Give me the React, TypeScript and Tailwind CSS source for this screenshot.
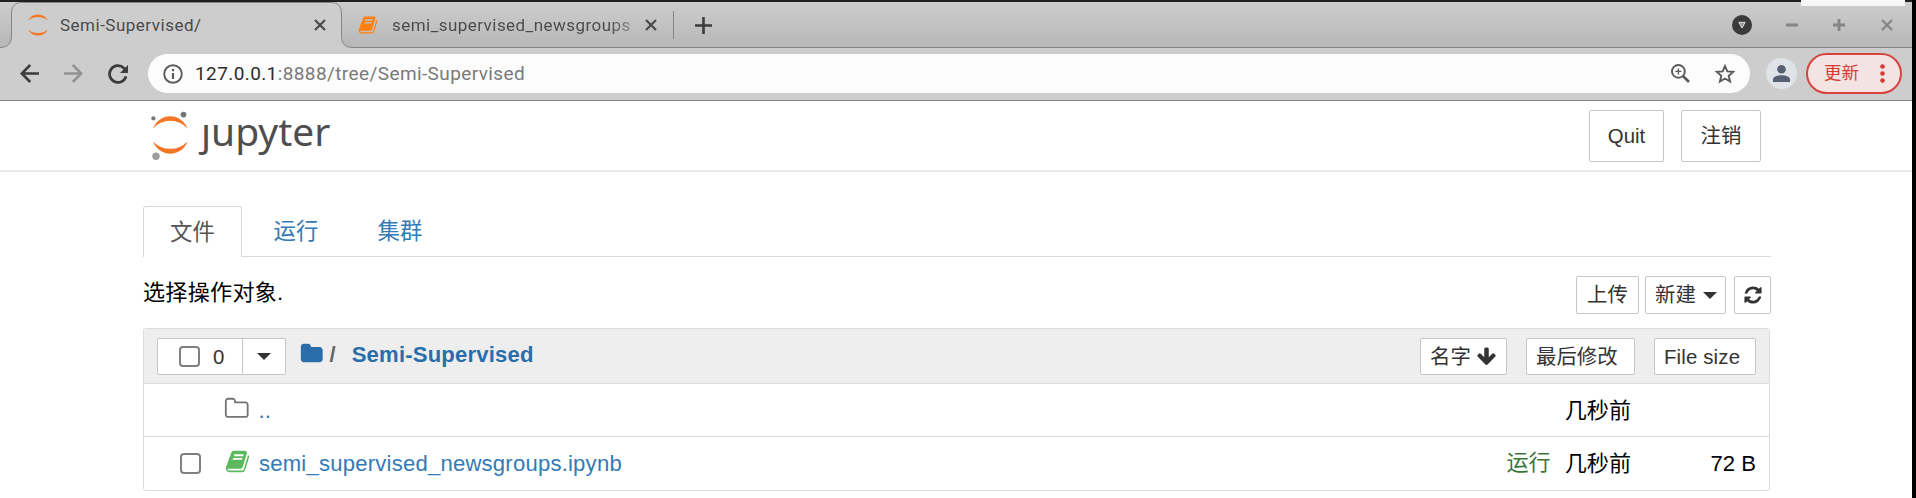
import type { ReactNode } from "react";

const BOOK =
  "M1703 478q40 57 18 129l-275 906q-19 64-76.5 107.5t-122.5 43.5h-923q-77 0-148.5-53.5t-99.5-131.5q-24-67-2-127 0-4 3-27t4-37q1-8-3-21.5t-3-19.5q2-11 8-21t16.5-23.5 16.5-23.5q23-38 45-91.5t30-91.5q3-10 .5-30t-.5-28q3-11 17-28t17-23q21-36 42-92t25-90q1-9-2.5-32t.5-28q4-13 22-30.5t22-22.5q19-26 42.5-84.5t27.5-96.5q1-8-3-25.5t-2-26.5q2-8 9-18t18-23 17-21q8-12 16.5-30.5t15-35 16-36 19.5-32 26.5-23.5 36-11.5 47.5 5.5l-1 3q38-9 51-9h761q74 0 114 56t18 130l-274 906q-36 119-71.5 153.5t-128.5 34.5h-869q-27 0-38 15-11 16-1 43 24 70 144 70h923q29 0 56-15.5t35-41.5l300-987q7-22 5-57 38 15 59 43zm-1064 2q-4 13 2 22.5t20 9.5h608q13 0 25.5-9.5t16.5-22.5l21-64q4-13-2-22.5t-20-9.5h-608q-13 0-25.5 9.5t-16.5 22.5zm-83 256q-4 13 2 22.5t20 9.5h608q13 0 25.5-9.5t16.5-22.5l21-64q4-13-2-22.5t-20-9.5h-608q-13 0-25.5 9.5t-16.5 22.5z";
const FOLDER =
  "M1728 608v704q0 92-66 158t-158 66h-1216q-92 0-158-66t-66-158v-960q0-92 66-158t158-66h320q92 0 158 66t66 158v32h672q92 0 158 66t66 158z";
const FOLDER_OPEN =
  "M1600 1312v-704q0-40-28-68t-68-28h-704q-40 0-68-28t-28-68v-64q0-40-28-68t-68-28h-320q-40 0-68 28t-28 68v960q0 40 28 68t68 28h1216q40 0 68-28t28-68zm128-704v704q0 92-66 158t-158 66h-1216q-92 0-158-66t-66-158v-960q0-92 66-158t158-66h320q92 0 158 66t66 158v32h672q92 0 158 66t66 158z";
const REFRESH =
  "M1639 1056q0 5-1 7-64 268-268 434.5t-478 166.5q-146 0-282.5-55t-243.5-157l-129 129q-19 19-45 19t-45-19-19-45v-448q0-26 19-45t45-19h448q26 0 45 19t19 45-19 45l-137 137q71 66 161 102t187 36q134 0 250-65t186-179q11-17 53-117 8-23 30-23h192q13 0 22.5 9.5t9.5 22.5zm25-800v448q0 26-19 45t-45 19h-448q-26 0-45-19t-19-45 19-45l138-138q-148-137-349-137-134 0-250 65t-186 179q-11 17-53 117-8 23-30 23h-199q-13 0-22.5-9.5t-9.5-22.5v-7q65-268 270-434.5t480-166.5q146 0 284 55.5t245 156.5l130-129q19-19 45-19t45 19 19 45z";
const ARROW_DOWN =
  "M1675 832q0 53-37 90l-651 652q-39 37-91 37-53 0-90-37l-651-652q-38-36-38-90 0-53 38-91l74-75q39-37 91-37 53 0 90 37l294 294v-704q0-52 38-90t90-38h128q52 0 90 38t38 90v704l294-294q37-37 90-37 52 0 91 37l75 75q37 39 37 91z";

function Glyph({ d, className }: { d: string; className: string }) {
  return (
    <svg viewBox="0 0 1792 1792" fill="currentColor" className={`shrink-0 ${className}`}>
      <path d={d} />
    </svg>
  );
}

function Cross({ className }: { className: string }) {
  return (
    <svg viewBox="0 0 12 12" className={`size-3 shrink-0 ${className}`} stroke="currentColor" strokeWidth="2.2">
      <path d="M1 1L11 11M11 1L1 11" />
    </svg>
  );
}

function Button({ className, children }: { className: string; children: ReactNode }) {
  return (
    <button
      className={`flex shrink-0 items-center whitespace-nowrap rounded-[2px] border border-[#c6c6c6] bg-white text-[20.4px] leading-none text-[#333] ${className}`}
    >
      {children}
    </button>
  );
}

function Checkbox() {
  return <span className="size-[21px] shrink-0 rounded-[4px] border-2 border-[#808080] bg-white" />;
}

function Caret() {
  return (
    <svg viewBox="0 0 14 7" className="h-[7px] w-[14px] shrink-0" fill="#333">
      <path d="M0 0H14L7 7Z" />
    </svg>
  );
}

function TabStrip() {
  return (
    <div className="relative flex h-[46px] shrink-0 border-b border-[#858585] bg-linear-to-b from-[#cdcdcd] to-[#b7b7b7] text-[17px] leading-none text-[#4a4a4a]">
      <svg viewBox="0 0 354 46" className="absolute left-0 top-0 h-[46px] w-[354px]">
        <path
          d="M0 45.5C7 45.5 11.5 42 11.5 34V12C11.5 4 15 .5 22 .5H331C338 .5 341.5 4 341.5 12V34C341.5 42 345 45.5 354 45.5V47H0Z"
          fill="#cdcdcd"
        />
        <path
          d="M0 45.5C7 45.5 11.5 42 11.5 34V12C11.5 4 15 .5 22 .5H331C338 .5 341.5 4 341.5 12V34C341.5 42 345 45.5 354 45.5"
          fill="none"
          stroke="#858585"
        />
      </svg>
      <div className="relative flex w-[342px] items-center pl-[28px] pt-px">
        <svg viewBox="0 0 20 22" className="h-[22px] w-5" fill="#f37726">
          <path d="M0 6.5A11.3 11.3 0 0 1 20 6.5A16 16 0 0 0 0 6.5Z" />
          <path d="M0 15.5A11.3 11.3 0 0 0 20 15.5A16 16 0 0 1 0 15.5Z" />
        </svg>
        <span className="ml-3 w-[254px] tracking-[0.5px]">Semi-Supervised/</span>
        <Cross className="" />
      </div>
      <div className="flex w-[332px] items-center pl-[16px] pt-px">
        <Glyph d={BOOK} className="size-[20px] text-[#ff8010]" />
        <span className="ml-[14px] w-[241px] whitespace-nowrap bg-linear-to-r from-[#4a4a4a] from-90% to-[#4a4a4a]/40 bg-clip-text py-1 tracking-[0.45px] text-transparent">
          semi_supervised_newsgroups
        </span>
        <Cross className="ml-[12px]" />
        <span className="ml-[16px] h-7 w-px bg-[#858585]" />
      </div>
      <div className="flex flex-1 items-center justify-between pl-[21px] pr-[19px] pt-px">
        <svg viewBox="0 0 17 17" className="size-[17px]" stroke="#3c3c3c" strokeWidth="2.6">
          <path d="M8.5 0V17M0 8.5H17" />
        </svg>
        <div className="flex items-center text-[#858585]">
          <svg viewBox="0 0 20 20" className="mr-[34px] size-5">
            <circle cx="10" cy="10" r="10" fill="#3a3a3a" />
            <path d="M6.8 7.3H13.2L10 13Z" fill="#999" stroke="#ddd" />
          </svg>
          <svg viewBox="0 0 12 12" className="mr-[35px] size-3" stroke="currentColor" strokeWidth="3">
            <path d="M0 6H12" />
          </svg>
          <svg viewBox="0 0 12 12" className="mr-[36px] size-3" stroke="currentColor" strokeWidth="2.8">
            <path d="M0 6H12M6 0V12" />
          </svg>
          <Cross className="" />
        </div>
      </div>
    </div>
  );
}

function Toolbar() {
  return (
    <div className="flex h-[53px] shrink-0 items-center border-b border-[#858585] bg-[#cdcdcd] pb-px pl-[20px]">
      <svg viewBox="0 0 19 19" className="size-[19px]" fill="none" stroke="#3c3c3c" strokeWidth="2.5">
        <path d="M19 9.5H2M10.2 1L1.7 9.5L10.2 18" />
      </svg>
      <svg viewBox="0 0 19 19" className="ml-[25px] size-[19px]" fill="none" stroke="#929292" strokeWidth="2.5">
        <path d="M0 9.5H17M8.8 1L17.3 9.5L8.8 18" />
      </svg>
      <svg viewBox="0 0 20 20" className="ml-[25px] size-5" fill="none" stroke="#3c3c3c" strokeWidth="2.8">
        <path d="M18 12.4A8.4 8.4 0 1 1 16 4.2L17.4 5.8" />
        <path d="M20 1V9H12Z" fill="#3c3c3c" stroke="none" />
      </svg>
      <div className="ml-5 flex h-[39px] w-[1602px] items-center rounded-full bg-[#fcfcfc] pl-[15px] pr-[15px] text-[19px] leading-none">
        <svg viewBox="0 0 20 20" className="size-5 shrink-0" fill="none" stroke="#5a5a5a" strokeWidth="1.9">
          <circle cx="10" cy="10" r="8.8" />
          <path d="M10 9V15M10 5V7.2" strokeWidth="2.2" />
        </svg>
        <span className="ml-3 flex-1 tracking-[0.4px] text-[#7a7a7a]">
          <span className="text-[#2c2c2c]">127.0.0.1</span>:8888/tree/Semi-Supervised
        </span>
        <svg viewBox="0 0 19 19" className="size-[19px]" fill="none" stroke="#5a5a5a" strokeWidth="1.9">
          <circle cx="7.4" cy="7.4" r="6.4" />
          <path d="M12 12L18 18" strokeWidth="2.6" />
          <path d="M7.4 4.4V10.4M4.4 7.4H10.4" strokeWidth="1.4" />
        </svg>
        <svg viewBox="0 0 20 20" className="ml-[25px] size-5" fill="none" stroke="#5a5a5a" strokeWidth="1.9">
          <path d="M10 2L12.3 7.4L18.2 7.9L13.7 11.8L15.1 17.6L10 14.5L4.9 17.6L6.3 11.8L1.8 7.9L7.7 7.4Z" />
        </svg>
      </div>
      <svg viewBox="0 0 31 31" className="ml-[16px] size-[31px]">
        <circle cx="15.5" cy="15.5" r="15.5" fill="#dfe2e7" />
        <circle cx="15.5" cy="11.2" r="4.3" fill="#566073" />
        <path d="M7 24V21.5C7 18.3 12 17.2 15.5 17.2S24 18.3 24 21.5V24Z" fill="#566073" />
      </svg>
      <div className="ml-[9px] flex h-[41px] w-[96px] items-center rounded-full border-2 border-[#d5443d] bg-[#f3e3e2] pl-[16px] text-[17.5px] leading-none text-[#d33b33]">
        <span className="pt-px">更新</span>
        <svg viewBox="0 0 5 19" className="ml-[21px] h-[19px] w-[5px]" fill="#d33b33">
          <circle cx="2.5" cy="2.5" r="2.3" />
          <circle cx="2.5" cy="9.5" r="2.3" />
          <circle cx="2.5" cy="16.5" r="2.3" />
        </svg>
      </div>
    </div>
  );
}

function Header() {
  return (
    <div className="flex h-[71px] shrink-0 items-start border-b-2 border-[#eaeaea] pl-[151px] pr-[151px]">
      <div className="flex h-[59px] flex-1 items-center">
        <svg viewBox="0 0 37 50" className="mt-[11px] h-[50px] w-[37px]" fill="#f37726">
          <path d="M2 17.5A18.3 18.3 0 0 1 36.5 17.5A23 23 0 0 0 2 17.5Z" />
          <path d="M2 30.5A18.3 18.3 0 0 0 36.5 30.5A24 24 0 0 1 2 30.5Z" />
          <circle cx="2.4" cy="7.4" r="2.1" fill="#767677" />
          <circle cx="32.5" cy="3.6" r="2.9" fill="#767677" />
          <circle cx="5" cy="45.3" r="3.7" fill="#9e9e9e" />
        </svg>
        <span className="ml-[13px] font-['Noto_Sans','Open_Sans',sans-serif] text-[39px] leading-none text-[#4e4e4e]">
          ȷupyter
        </span>
      </div>
      <Button className="mr-[17px] mt-[9px] h-[52px] w-[75px] justify-center pt-px">Quit</Button>
      <Button className="mt-[9px] h-[52px] w-[80px] justify-center pt-px">注销</Button>
    </div>
  );
}

function Row({ className, children }: { className: string; children: ReactNode }) {
  return <div className={`flex items-center border-[#dcdcdc] ${className}`}>{children}</div>;
}

export default function App() {
  return (
    <div className="flex h-[498px] w-[1916px] overflow-hidden bg-black font-['Liberation_Sans','Noto_Sans_CJK_SC',sans-serif]">
      <div className="relative flex w-[1912px] flex-col bg-white">
        <div className="h-[2px] shrink-0 bg-[#231f20]" />
        <div className="absolute right-[7px] top-0 z-10 h-[6px] w-[104px] bg-[#f7f7f7]" />
        <div className="flex flex-col font-['Roboto','Noto_Sans_CJK_SC',sans-serif]">
          <TabStrip />
          <Toolbar />
        </div>
        <Header />
        <main className="mx-[143px] mt-[34px] flex w-[1628px] flex-col text-[22.1px] leading-none text-black">
          <nav className="flex h-[51px] border-b border-[#dadada] text-[22.4px] text-[#337ab7]">
            <a className="-mb-px flex h-[51px] w-[99px] items-center justify-center rounded-t-[3px] border border-b-0 border-[#d8d8d8] bg-white pt-[2px] text-[#555]">
              文件
            </a>
            <a className="ml-[5px] flex w-[98px] items-center justify-center pt-[2px]">运行</a>
            <a className="ml-[6px] flex w-[98px] items-center justify-center pt-[2px]">集群</a>
          </nav>
          <div className="mt-[19px] flex h-[38px] items-center">
            <span className="mb-[3px] flex-1 tracking-[0.25px]">选择操作对象.</span>
            <Button className="h-[38px] w-[63px] justify-center">上传</Button>
            <Button className="ml-[6px] h-[38px] w-[81px] gap-[7px] pl-[9px]">
              新建
              <Caret />
            </Button>
            <Button className="ml-[8px] h-[38px] w-[37px] justify-center">
              <Glyph d={REFRESH} className="size-[20px]" />
            </Button>
          </div>
          <section className="mt-[14px] flex h-[163px] w-[1627px] flex-col rounded-[3px] border border-[#dcdcdc]">
            <Row className="h-[55px] border-b bg-[#eee] pl-[13px] pr-[13px] pt-px">
              <div className="flex h-[37px] w-[129px] rounded-[2px] border border-[#c6c6c6] bg-white">
                <div className="flex w-[85px] items-center border-r border-[#c6c6c6] pl-[21px] text-[20.4px] text-[#333]">
                  <Checkbox />
                  <span className="ml-[13px] pt-px">0</span>
                </div>
                <div className="flex flex-1 items-center justify-center">
                  <Caret />
                </div>
              </div>
              <Glyph d={FOLDER} className="mb-[5px] ml-[14px] size-[23.5px] text-[#296eaa]" />
              <span className="mb-[3px] ml-[6px] font-bold text-[#666]">/</span>
              <a className="mb-[3px] ml-[16px] flex-1 font-bold tracking-[0.19px] text-[#296eaa]">Semi-Supervised</a>
              <Button className="h-[37px] w-[87px] gap-[5px] pl-[9px] pt-px">
                名字
                <Glyph d={ARROW_DOWN} className="mb-px size-[21px]" />
              </Button>
              <Button className="ml-[19px] h-[37px] w-[109px] pl-[9px] pt-px">最后修改</Button>
              <Button className="ml-[19px] h-[37px] w-[102px] pl-[9px] pt-px tracking-[0.15px]">File size</Button>
            </Row>
            <Row className="h-[53px] border-b pl-[80px]">
              <Glyph d={FOLDER_OPEN} className="mb-[3px] size-[25.5px] text-[#757575]" />
              <a className="ml-[9px] flex-1 pt-[2px] text-[#337ab7]">..</a>
              <span className="mr-[138px] pt-[2px]">几秒前</span>
            </Row>
            <Row className="h-[53px] pl-[36px] pr-[13px]">
              <Checkbox />
              <Glyph d={BOOK} className="mb-[4px] ml-[24px] size-[25px] text-[#5cb85c]" />
              <a className="ml-[9px] flex-1 pt-px tracking-[0.21px] text-[#337ab7]">semi_supervised_newsgroups.ipynb</a>
              <span className="mr-[14px] text-[#3c763d]">运行</span>
              <span className="pt-[2px]">几秒前</span>
              <span className="w-[125px] pt-px text-right">72 B</span>
            </Row>
          </section>
        </main>
      </div>
    </div>
  );
}
